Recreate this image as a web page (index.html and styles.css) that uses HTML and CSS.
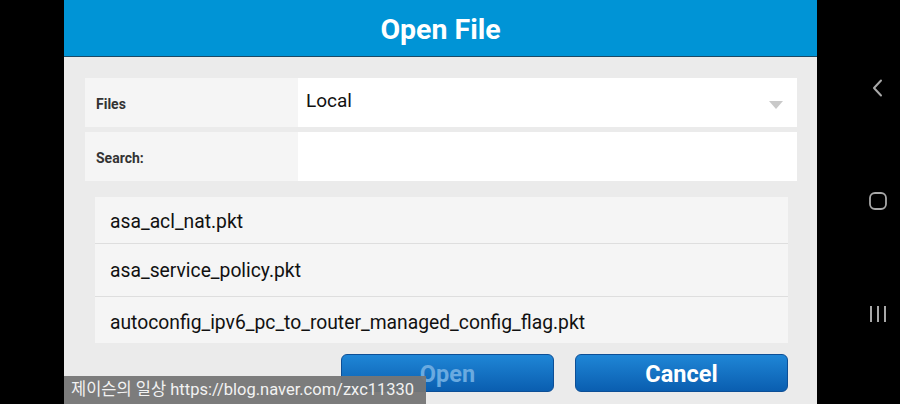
FILE: index.html
```html
<!DOCTYPE html>
<html lang="ko">
<head>
    <meta charset="UTF-8">
    <meta name="viewport" content="width=device-width, initial-scale=1.0">
    <title>Open File</title>
    <link rel="stylesheet" href="styles.css">
</head>
<body>
    <div class="screen">
        <div class="gutter"></div>

        <div class="dialog">
            <div class="dialog-header">
                <h1>Open File</h1>
            </div>

            <div class="dialog-body">
                <div class="field-row">
                    <div class="field-label">Files</div>
                    <div class="field-value select">
                        <span>Local</span>
                        <span class="caret"></span>
                    </div>
                </div>
                <div class="field-row">
                    <div class="field-label">Search:</div>
                    <div class="field-value"></div>
                </div>

                <!-- 파일 목록 -->
                <ul class="file-list">
                    <li class="file-item first">asa_acl_nat.pkt</li>
                    <li class="file-item">asa_service_policy.pkt</li>
                    <li class="file-item last">autoconfig_ipv6_pc_to_router_managed_config_flag.pkt</li>
                </ul>

                <div class="actions">
                    <button class="btn btn-disabled">Open</button>
                    <button class="btn">Cancel</button>
                </div>
            </div>
        </div>

        <div class="nav-bar">
            <svg class="nav-icon" width="14" height="18" viewBox="0 0 14 18">
                <path d="M10 1.5 L3 9 L10 16.5" fill="none" stroke="#a8a8a8" stroke-width="2" stroke-linecap="round" stroke-linejoin="round"/>
            </svg>
            <svg class="nav-icon" width="20" height="20" viewBox="0 0 20 20">
                <rect x="2" y="2" width="16" height="16" rx="5" fill="none" stroke="#a8a8a8" stroke-width="1.8"/>
            </svg>
            <svg class="nav-icon" width="20" height="18" viewBox="0 0 20 18">
                <path d="M3 1 V17 M10 1 V17 M17 1 V17" stroke="#a8a8a8" stroke-width="2"/>
            </svg>
        </div>

        <div class="watermark">제이슨의 일상 https://blog.naver.com/zxc11330</div>
    </div>
</body>
</html>
```

FILE: styles.css
```css
* {
    box-sizing: border-box;
    margin: 0;
    padding: 0;
}
body {
    font-family: Roboto, "Noto Sans", "Noto Sans CJK KR", sans-serif;
    background-color: #000;
}
.screen {
    position: relative;
    display: flex;
    width: 900px;
    height: 404px;
    overflow: hidden;
}
.gutter {
    width: 64px;
    flex-shrink: 0;
}
.dialog {
    width: 753px;
    flex-shrink: 0;
    display: flex;
    flex-direction: column;
    background-color: #ebebeb;
}
.dialog-header {
    height: 57px;
    display: flex;
    align-items: center;
    justify-content: center;
    background-color: #0094d6;
    border-bottom: 1px solid #1b4a66;
}
.dialog-header h1 {
    color: #fff;
    font-size: 28.5px;
    font-weight: 700;
    margin-top: 3px;
}
.dialog-body {
    padding: 21px 20px 0 21px;
}
.field-row {
    display: flex;
    height: 49px;
    margin-bottom: 5px;
}
.field-label {
    width: 213px;
    display: flex;
    align-items: center;
    padding-left: 11px;
    padding-top: 3px;
    background-color: #f5f5f5;
    color: #333;
    font-size: 14px;
    font-weight: 700;
}
.field-value {
    flex: 1;
    background-color: #fff;
}
.select {
    display: flex;
    align-items: center;
    justify-content: space-between;
    padding: 0 14px 5px 8px;
    font-size: 19px;
    color: #111;
}
.caret {
    width: 0;
    height: 0;
    margin-top: 10px;
    border-left: 7px solid transparent;
    border-right: 7px solid transparent;
    border-top: 8px solid #c9c9c9;
}
.file-list {
    list-style: none;
    margin: 16px 9px 0 10px;
}
.file-item {
    display: flex;
    align-items: center;
    height: 53px;
    padding-left: 15px;
    background-color: #f5f5f5;
    border-top: 1px solid #dedede;
    font-size: 19.3px;
    color: #111;
}
.file-item.first {
    height: 46px;
    border-top: none;
    padding-top: 2px;
}
.file-item.last {
    height: 47px;
    padding-top: 4px;
}
.actions {
    display: flex;
    justify-content: flex-end;
    gap: 21px;
    margin-top: 11px;
    padding-right: 9px;
}
.btn {
    width: 213px;
    height: 38px;
    padding-top: 2px;
    border: 1px solid #0d4f96;
    border-radius: 6px;
    background: linear-gradient(#1f86d6, #0a5eb0);
    color: #fff;
    font-family: Roboto, sans-serif;
    font-size: 23.5px;
    font-weight: 700;
}
.btn-disabled {
    color: #6aaae0;
}
.nav-bar {
    flex: 1;
    display: flex;
    flex-direction: column;
    align-items: center;
    padding: 79px 0 0 38px;
}
.nav-icon {
    display: block;
}
.nav-icon + .nav-icon {
    margin-top: 94px;
}
.watermark {
    position: absolute;
    left: 64px;
    top: 376px;
    width: 362px;
    height: 28px;
    padding-left: 7px;
    line-height: 28px;
    background-color: rgba(118, 118, 118, 0.95);
    color: #f2f2f2;
    font-size: 16.5px;
    white-space: nowrap;
}
```
